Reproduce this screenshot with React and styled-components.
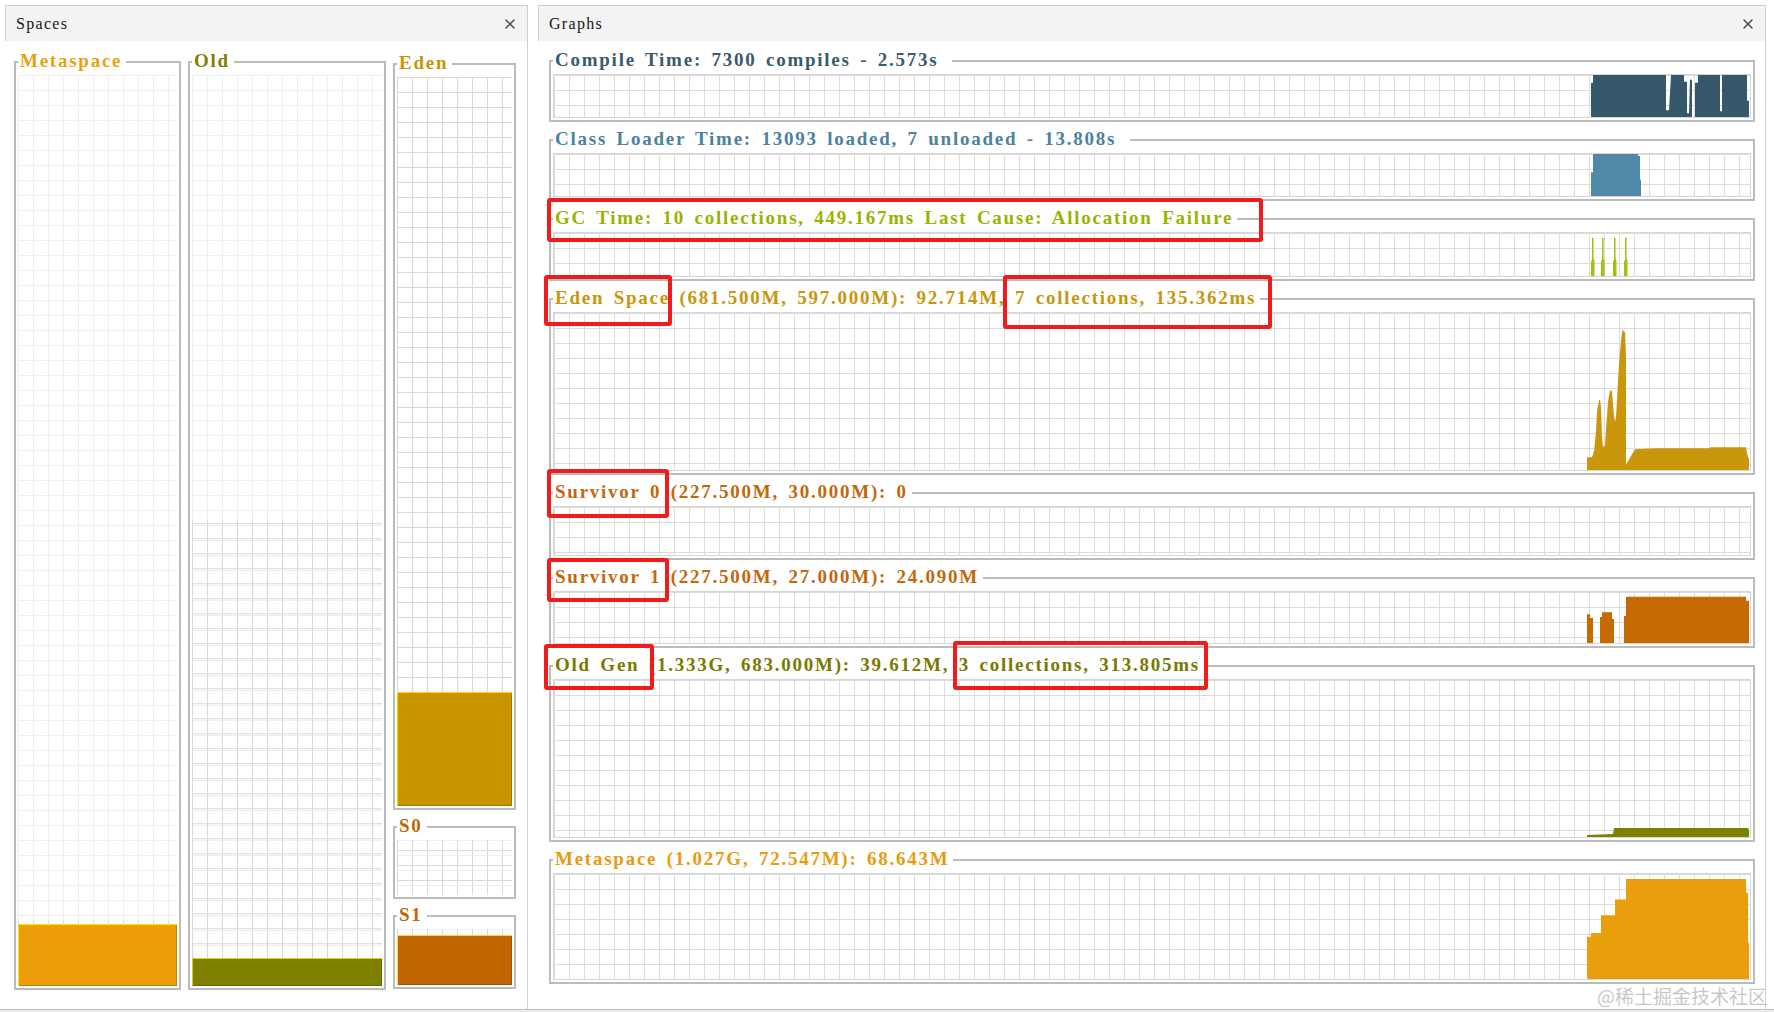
import styled, { createGlobalStyle } from 'styled-components'
import { X } from 'lucide-react'

const FONT = `"Liberation Serif", "Times New Roman", serif`
const FRAME = '#bbbbbb'

const gridLines = (color) => `
  background-image:
    linear-gradient(to right, ${color} 1px, transparent 1px),
    linear-gradient(to bottom, ${color} 1px, transparent 1px);
  background-size: 15px 15px;
`

const GlobalStyle = createGlobalStyle`
  * { box-sizing: border-box; }
  html, body { margin: 0; padding: 0; background: #fff; }
  body { font-family: ${FONT}; }
`

const Screen = styled.div`
  position: relative;
  width: 1774px;
  height: 1012px;
  display: flex;
  flex-direction: column;
  background: #fff;
  overflow: hidden;
`

const Workspace = styled.div`
  flex: 1;
  min-height: 0;
  display: flex;
  gap: 10px;
  padding: 5px 8px 0 5px;
`

const StatusStrip = styled.div`
  height: 3px;
  border-top: 1px solid #bababa;
  background: #ececec;
`

const Panel = styled.section`
  display: flex;
  flex-direction: column;
  width: ${p => (p.$width ? `${p.$width}px` : 'auto')};
  flex: ${p => (p.$width ? 'none' : '1')};
  border-right: 1px solid #cfcfcf;
`

const PanelHeader = styled.header`
  height: 36px;
  flex: none;
  display: flex;
  align-items: center;
  justify-content: space-between;
  padding: 0 9px 0 10px;
  background: #f3f3f3;
  border: 1px solid #cfcfcf;
  border-bottom: none;
  border-right: none;
`

const PanelTitle = styled.span`
  font: 16px/1 ${FONT};
  letter-spacing: 1.3px;
  color: #161616;
`

const CloseButton = styled.span`
  display: flex;
  color: #4a4a4a;
`

const SpacesBody = styled.div`
  flex: 1;
  min-height: 0;
  display: flex;
  gap: 7px;
  padding: 11px 10px 19px 9px;
`

const YoungColumn = styled.div`
  width: 123px;
  flex: none;
  display: flex;
  flex-direction: column;
  gap: 7px;
  margin: 2px 0 1px;
`

const GraphsBody = styled.div`
  flex: 1;
  min-height: 0;
  display: flex;
  flex-direction: column;
  gap: 8px;
  padding: 10px 10px 0 11px;
`

/* titled border: the top rule runs through the middle of the title line */
const Frame = styled.div`
  display: flex;
  flex-direction: column;
  min-width: 0;
  width: ${p => (p.$w ? `${p.$w}px` : 'auto')};
  height: ${p => (p.$h ? `${p.$h}px` : 'auto')};
  flex: ${p => (p.$w || p.$h ? 'none' : '1')};
`

const TitleRow = styled.div`
  height: 18px;
  flex: none;
  display: flex;
`

const Corner = styled.span`
  align-self: flex-end;
  width: 4px;
  height: 9px;
  border-top: 2px solid ${FRAME};
  border-left: 2px solid ${FRAME};
`

const Rule = styled.span`
  align-self: flex-end;
  flex: 1;
  height: 9px;
  border-top: 2px solid ${FRAME};
  border-right: 2px solid ${FRAME};
`

const Title = styled.span`
  padding: 0 4px 0 2px;
  font: bold 19px/18px ${FONT};
  letter-spacing: 1.75px;
  word-spacing: 3px;
  white-space: pre;
  color: ${p => p.$color};
`

const FrameBody = styled.div`
  flex: 1;
  min-height: 0;
  display: flex;
  flex-direction: column;
  padding: 5px 2px 2px;
  border: 2px solid ${FRAME};
  border-top: none;
`

const Mark = styled.span`
  position: relative;
  display: inline-block;
  &::after {
    content: '';
    position: absolute;
    top: ${p => p.$at[0]}px;
    right: ${p => p.$at[1]}px;
    bottom: ${p => p.$at[2]}px;
    left: ${p => p.$at[3]}px;
    border: 4px solid #f01c1c;
    border-radius: 3px;
    pointer-events: none;
  }
`

const Tank = styled.div`
  flex: 1;
  min-height: 0;
  display: flex;
  flex-direction: column;
  ${gridLines('#eeeeee')}
`

const Headroom = styled.div`
  flex: ${p => p.$grow} 1 0;
`

const Committed = styled.div`
  flex: ${p => p.$grow} 1 0;
  ${gridLines('#d8d8d8')}
  background-position: left bottom;
`

const Fill = styled.div`
  flex: ${p => p.$grow} 1 0;
  background: ${p => p.$color};
  border-top: 1px solid ${p => p.$hi};
  box-shadow: inset 1px 0 0 ${p => p.$hi}, inset -1px -1px 0 rgba(0, 0, 0, 0.18);
`

const Chart = styled.div`
  flex: 1;
  min-height: 0;
  display: flex;
  justify-content: flex-end;
  border: 1px solid #d6d6d6;
  ${gridLines('#dcdcdc')}
`

const Trace = styled.svg`
  display: block;
  flex: none;
  width: 171px;
  height: 100%;
`

const Watermark = styled.div`
  position: absolute;
  right: 7px;
  bottom: 7px;
  font: 19px/1 "Noto Sans CJK SC", "Noto Sans", sans-serif;
  color: rgba(150, 150, 150, 0.55);
  pointer-events: none;
`

const spaces = {
  metaspace: { label: 'Metaspace', color: '#e9a112', fill: '#eb9e09', hi: '#ffe100', max: 1027, committed: 72.547, used: 68.643 },
  old: { label: 'Old', color: '#7f7f00', fill: '#808000', hi: '#d4d400', max: 1333, committed: 683, used: 39.612 },
  eden: { label: 'Eden', color: '#c99400', fill: '#c99400', hi: '#ffd800', max: 597, committed: 597, used: 92.714 },
  s0: { label: 'S0', color: '#c46600', fill: '#c46600', hi: '#ffc000', max: 30, committed: 30, used: 0 },
  s1: { label: 'S1', color: '#c46600', fill: '#c46600', hi: '#ffcf40', max: 27, committed: 27, used: 24.09 },
}

const spike = (a) =>
  `${a},45 ${a},30 ${a + 1},28 ${a + 1},5 ${a + 2.5},5 ${a + 2.5},26 ${a + 3.5},29 ${a + 3.5},45`

const graphs = [
  {
    id: 'compile', h: 71, color: '#3a5a6e', fill: '#35586b', vb: 44,
    title: ['Compile Time: 7300 compiles - 2.573s '],
    shapes: ['12,44 12,8 14,8 14,0 87,0 87,37 90,37 92,0 105,0 105,7 108,7 108,40 110,40 111,5 113,5 113,44 116,44 116,8 119,8 119,0 141,0 141,38 143,38 143,0 168,0 168,27 170,27 170,44'],
  },
  {
    id: 'class', h: 71, color: '#4c82a1', fill: '#5088a8', vb: 44,
    title: ['Class Loader Time: 13093 loaded, 7 unloaded - 13.808s '],
    shapes: ['12,44 12,19 14,19 14,0 59,0 59,2 61,2 61,27 62,27 62,44'],
  },
  {
    id: 'gc', h: 72, color: '#98b400', fill: '#a3c00a', vb: 45,
    title: [{ text: 'GC Time: 10 collections, 449.167ms Last Cause: Allocation Failure', at: [-11, -30, -15, -8] }],
    shapes: [spike(12), spike(22), spike(34), spike(45)],
  },
  {
    id: 'eden', h: 186, color: '#c8960c', fill: '#c9960c', vb: 159,
    title: [
      { text: 'Eden Space', at: [-14, -2, -19, -11] },
      ' (681.500M, 597.000M): 92.714M, ',
      { text: '7 collections, 135.362ms', at: [-14, -16, -22, -12] },
    ],
    shapes: ['8,159 8,146 13,146 15,140 17,120 18,100 19,94 20,88 21,88 22,95 23,125 24,136 26,134 27,118 28,104 29,90 30,84 31,79 32,78 33,80 34,92 35,104 36,110 37,106 38,88 39,70 40,52 41,40 42,28 43,20 44,16 45,20 46,18 47,44 47,154 49,150 56,138 77,137 131,137 131,136 167,136 168,142 170,148 170,159'],
  },
  {
    id: 's0', h: 77, color: '#c2680e', fill: '#c46a00', vb: 50,
    title: [{ text: 'Survivor 0', at: [-14, -8, -17, -8] }, ' (227.500M, 30.000M): 0'],
    shapes: [],
  },
  {
    id: 's1', h: 80, color: '#c2680e', fill: '#c46a00', vb: 53,
    title: [{ text: 'Survivor 1', at: [-10, -8, -16, -8] }, ' (227.500M, 27.000M): 24.090M'],
    shapes: [
      '8,53 8,23 11,23 11,27 14,27 14,53',
      '21,53 21,26 23,26 23,21 33,21 33,28 35,28 35,53',
      '45,53 45,25 47,25 47,5 167,5 167,9 170,9 170,53',
    ],
  },
  {
    id: 'old', h: 186, color: '#7a7a00', fill: '#7f7f00', vb: 159,
    title: [
      { text: 'Old Gen', at: [-12, -15, -16, -11] },
      ' (1.333G, 683.000M): 39.612M, ',
      { text: '3 collections, 313.805ms', at: [-15, -8, -16, -6] },
    ],
    shapes: ['8,159 8,157 34,156 35,150 169,150 170,152 170,159'],
  },
  {
    id: 'meta', h: 134, color: '#e89a10', fill: '#e99e0b', vb: 107,
    title: ['Metaspace (1.027G, 72.547M): 68.643M'],
    shapes: ['8,107 8,64 12,64 12,60 22,60 22,42 36,42 36,26 47,26 47,5 167,5 167,19 169,19 169,70 170,70 170,107'],
  },
]

const TitledBox = ({ w, h, color, title, children }) => (
  <Frame $w={w} $h={h}>
    <TitleRow>
      <Corner />
      <Title $color={color}>{title}</Title>
      <Rule />
    </TitleRow>
    <FrameBody>{children}</FrameBody>
  </Frame>
)

const SpaceBox = ({ space, w, h }) => (
  <TitledBox w={w} h={h} color={space.color} title={space.label}>
    <Tank>
      <Headroom $grow={space.max - space.committed} />
      <Committed $grow={space.committed - space.used} />
      {space.used > 0 && <Fill $grow={space.used} $color={space.fill} $hi={space.hi} />}
    </Tank>
  </TitledBox>
)

const GraphBox = ({ graph }) => (
  <TitledBox
    h={graph.h}
    color={graph.color}
    title={graph.title.map((part, i) =>
      typeof part === 'string' ? part : <Mark key={i} $at={part.at}>{part.text}</Mark>
    )}
  >
    <Chart>
      <Trace viewBox={`0 0 171 ${graph.vb}`} preserveAspectRatio="none">
        {graph.shapes.map((pts, i) => (
          <polygon key={i} points={pts} fill={graph.fill} />
        ))}
      </Trace>
    </Chart>
  </TitledBox>
)

const Close = () => (
  <CloseButton>
    <X size={16} strokeWidth={2.2} />
  </CloseButton>
)

export default function App() {
  return (
    <Screen>
      <GlobalStyle />
      <Workspace>
        <Panel $width={523}>
          <PanelHeader>
            <PanelTitle>Spaces</PanelTitle>
            <Close />
          </PanelHeader>
          <SpacesBody>
            <SpaceBox space={spaces.metaspace} w={167} />
            <SpaceBox space={spaces.old} w={198} />
            <YoungColumn>
              <SpaceBox space={spaces.eden} />
              <SpaceBox space={spaces.s0} h={82} />
              <SpaceBox space={spaces.s1} h={83} />
            </YoungColumn>
          </SpacesBody>
        </Panel>
        <Panel>
          <PanelHeader>
            <PanelTitle>Graphs</PanelTitle>
            <Close />
          </PanelHeader>
          <GraphsBody>
            {graphs.map(g => (
              <GraphBox key={g.id} graph={g} />
            ))}
          </GraphsBody>
        </Panel>
      </Workspace>
      <StatusStrip />
      <Watermark>@稀土掘金技术社区</Watermark>
    </Screen>
  )
}
